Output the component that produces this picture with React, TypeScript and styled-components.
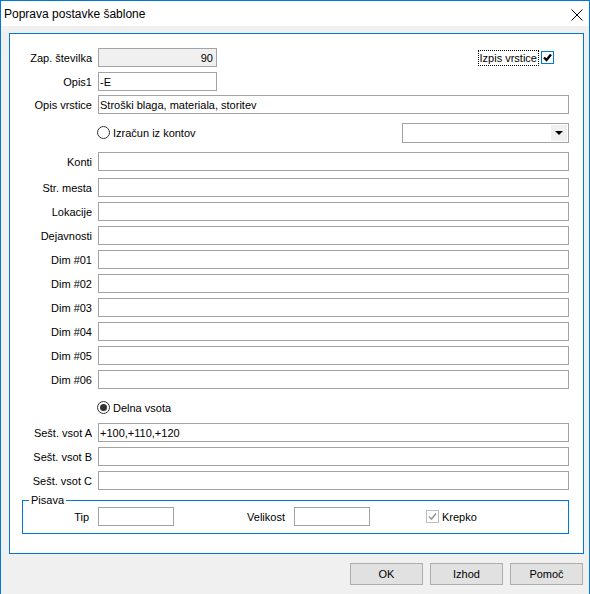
import React from "react";
import styled, { createGlobalStyle } from "styled-components";

const GlobalStyle = createGlobalStyle`
  html, body {
    margin: 0;
    padding: 0;
    background: #ffffff;
  }
  body {
    font-family: "Liberation Sans", Arial, sans-serif;
    font-size: 11px;
    color: #000;
  }
`;

const Window = styled.div`
  box-sizing: border-box;
  width: 590px;
  height: 594px;
  overflow: hidden;
  background: #f0f0f0;
  border: 1px solid #0078d7;
  border-bottom: none;
  display: flex;
  flex-direction: column;
`;

const TitleBar = styled.div`
  height: 25px;
  flex: none;
  background: #ffffff;
  display: flex;
  align-items: center;
  padding: 0 6px 0 3px;
`;

const Title = styled.div`
  flex: 1;
  font-size: 12px;
  color: #000;
`;

const CloseIcon = styled.svg`
  width: 12px;
  height: 12px;
  margin-top: 2px;
`;

const Body = styled.div`
  flex: 1;
  padding: 7px 5px 0 8px;
`;

const Panel = styled.div`
  box-sizing: border-box;
  height: 521px;
  background: #ffffff;
  border: 1px solid #0078d7;
  padding: 0 14px 0 0;
  display: flex;
  flex-direction: column;
`;

const Row = styled.div<{ $top: number }>`
  display: flex;
  align-items: center;
  height: 19px;
  flex: none;
  margin-top: ${({ $top }) => $top}px;
`;

const Label = styled.div<{ $w?: number; $gap?: number }>`
  width: ${({ $w }) => $w ?? 82}px;
  margin-right: ${({ $gap }) => $gap ?? 6}px;
  flex: none;
  text-align: right;
  white-space: nowrap;
`;

const Field = styled.input<{ $w?: number; $right?: boolean; $off?: boolean }>`
  box-sizing: border-box;
  height: 19px;
  margin: 0;
  width: ${({ $w }) => ($w ? `${$w}px` : "auto")};
  flex: ${({ $w }) => ($w ? "none" : "1")};
  min-width: 0;
  border: 1px solid #a3a3a3;
  border-radius: 0;
  padding: 0 3px 0 1px;
  background: ${({ $off }) => ($off ? "#f0f0f0" : "#ffffff")};
  text-align: ${({ $right }) => ($right ? "right" : "left")};
  font-family: "Liberation Sans", Arial, sans-serif;
  font-size: 11px;
  color: #000;
  outline: none;
`;

const Spacer = styled.div`
  flex: 1;
`;

const FocusLabel = styled.div`
  border: 1px dotted #000;
  padding: 0 1px;
  line-height: 14px;
  margin-right: 2px;
  white-space: nowrap;
`;

const Check = styled.div<{ $off?: boolean }>`
  box-sizing: border-box;
  width: 13px;
  height: 13px;
  flex: none;
  border: 1px solid ${({ $off }) => ($off ? "#bcbcbc" : "#0078d7")};
  background: #ffffff;
  display: flex;
  align-items: center;
  justify-content: center;
`;

const CheckWrap = styled.div<{ $left?: number }>`
  display: flex;
  align-items: center;
  margin-left: ${({ $left }) => $left ?? 0}px;
  margin-right: 15px;
`;

const Radio = styled.div<{ $on?: boolean }>`
  box-sizing: border-box;
  width: 13px;
  height: 13px;
  flex: none;
  margin-left: -1px;
  border-radius: 50%;
  border: 1px solid #333333;
  background: #ffffff;
  display: flex;
  align-items: center;
  justify-content: center;
  &::after {
    content: "";
    display: ${({ $on }) => ($on ? "block" : "none")};
    width: 7px;
    height: 7px;
    border-radius: 50%;
    background: #333333;
  }
`;

const OptionText = styled.span`
  margin-left: 3px;
  white-space: nowrap;
`;

const Indent = styled.div`
  width: 88px;
  flex: none;
`;

const Combo = styled.div`
  box-sizing: border-box;
  width: 167px;
  height: 20px;
  border: 1px solid #a3a3a3;
  background: #ffffff;
  display: flex;
  justify-content: flex-end;
  padding: 1px;
`;

const ComboArrow = styled.div`
  width: 16px;
  background: #f0f0f0;
  display: flex;
  align-items: center;
  justify-content: center;
  &::after {
    content: "";
    width: 0;
    height: 0;
    border-left: 4px solid transparent;
    border-right: 4px solid transparent;
    border-top: 4px solid #000;
  }
`;

const GroupBox = styled.fieldset`
  margin: 3px 0 0 12px;
  padding: 0 0 7px 0;
  border: 1px solid #0078d7;
  min-inline-size: 0;
`;

const Legend = styled.legend`
  margin-left: 6px;
  padding: 0 2px;
  line-height: 14px;
  font-size: 11px;
`;

const Footer = styled.div`
  display: flex;
  justify-content: flex-end;
  gap: 7px;
  margin-top: 9px;
  padding-right: 1px;
`;

const Button = styled.button`
  box-sizing: border-box;
  width: 73px;
  height: 22px;
  margin: 0;
  padding: 0;
  background: #e1e1e1;
  border: 1px solid #adadad;
  border-radius: 0;
  font-family: "Liberation Sans", Arial, sans-serif;
  font-size: 11px;
  color: #000;
`;

const Tick = ({ color, bold }: { color: string; bold?: boolean }) => (
  <svg width="9" height="9" viewBox="0 0 9 9">
    <path d="M1 4.5 L3.5 7 L8 1.5" fill="none" stroke={color} strokeWidth={bold ? 2.3 : 1.6} />
  </svg>
);

const fieldRows: { label: string; top: number }[] = [
  { label: "Konti", top: 10 },
  { label: "Str. mesta", top: 7 },
  { label: "Lokacije", top: 5 },
  { label: "Dejavnosti", top: 5 },
  { label: "Dim #01", top: 5 },
  { label: "Dim #02", top: 5 },
  { label: "Dim #03", top: 5 },
  { label: "Dim #04", top: 5 },
  { label: "Dim #05", top: 5 },
  { label: "Dim #06", top: 5 },
];

const sumRows = [
  { label: "Sešt. vsot A", top: 6, value: "+100,+110,+120" },
  { label: "Sešt. vsot B", top: 5, value: "" },
  { label: "Sešt. vsot C", top: 5, value: "" },
];

export default function App() {
  return (
    <>
      <GlobalStyle />
      <Window>
        <TitleBar>
          <Title>Poprava postavke šablone</Title>
          <CloseIcon viewBox="0 0 12 12">
            <path d="M0.5 0.5 L11.5 11.5 M11.5 0.5 L0.5 11.5" stroke="#000" strokeWidth="1" />
          </CloseIcon>
        </TitleBar>
        <Body>
          <Panel>
            <Row $top={14}>
              <Label>Zap. številka</Label>
              <Field $w={119} $right $off readOnly value="90" />
              <Spacer />
              <CheckWrap>
                <FocusLabel>Izpis vrstice</FocusLabel>
                <Check>
                  <Tick color="#000" bold />
                </Check>
              </CheckWrap>
            </Row>
            <Row $top={5}>
              <Label>Opis1</Label>
              <Field $w={119} readOnly value="-E" />
            </Row>
            <Row $top={4}>
              <Label>Opis vrstice</Label>
              <Field readOnly value="Stroški blaga, materiala, storitev" />
            </Row>
            <Row $top={9}>
              <Indent />
              <Radio />
              <OptionText>Izračun iz kontov</OptionText>
              <Spacer />
              <Combo>
                <ComboArrow />
              </Combo>
            </Row>
            {fieldRows.map((r) => (
              <Row key={r.label} $top={r.top}>
                <Label>{r.label}</Label>
                <Field readOnly value="" />
              </Row>
            ))}
            <Row $top={9}>
              <Indent />
              <Radio $on />
              <OptionText>Delna vsota</OptionText>
            </Row>
            {sumRows.map((r) => (
              <Row key={r.label} $top={r.top}>
                <Label>{r.label}</Label>
                <Field readOnly value={r.value} />
              </Row>
            ))}
            <GroupBox>
              <Legend>Pisava</Legend>
              <Row $top={0}>
                <Label $w={66} $gap={9}>Tip</Label>
                <Field $w={76} readOnly value="" />
                <Label $w={111} $gap={9}>Velikost</Label>
                <Field $w={76} readOnly value="" />
                <CheckWrap $left={56}>
                  <Check $off>
                    <Tick color="#9a9a9a" />
                  </Check>
                  <OptionText>Krepko</OptionText>
                </CheckWrap>
              </Row>
            </GroupBox>
          </Panel>
          <Footer>
            <Button>OK</Button>
            <Button>Izhod</Button>
            <Button>Pomoč</Button>
          </Footer>
        </Body>
      </Window>
    </>
  );
}
